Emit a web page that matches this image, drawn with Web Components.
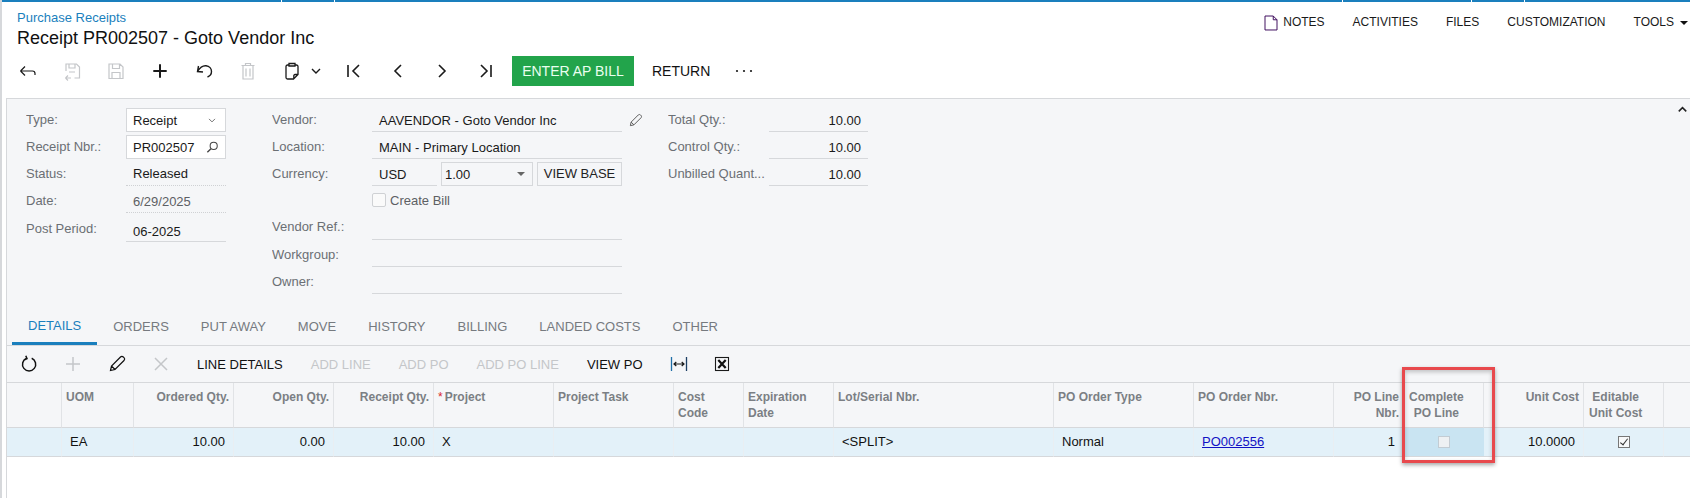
<!DOCTYPE html>
<html>
<head>
<meta charset="utf-8">
<title>Receipt PR002507</title>
<style>
  html, body { margin: 0; padding: 0; background: #fff; }
  body { font: 13px "Liberation Sans", Arial, sans-serif; color: #1a1a1a; height: 498px; overflow: hidden; }
</style>
</head>
<body>

<template id="ico">
  <style>:host { display: inline-flex; flex: none; width: 24px; height: 24px; align-items: center; justify-content: center; } svg { display: block; overflow: visible; }</style>
  <svg width="24" height="24" viewBox="0 0 24 24" fill="none" stroke="currentColor" stroke-width="1.2"></svg>
</template>

<script>
const ICONS = {
  back: '<path d="M4.500 12h12c1.700 0 2.500 1 2.500 2.500V16M4.500 12L9 7.500M4.500 12L9 16.500"/>',
  saveclose: '<path d="M6 12V5h10.500L19.500 8v11h-5M9 5v4h6V5M11 19H5.500M5.500 19L8 16.500M5.500 19L8 21.500M9 13h6"/>',
  save: '<path d="M5 5h11l3 3v11.500H5zM8.500 5v4.500h7V5M8 19.500v-6h8v6"/>',
  plus: '<path stroke-width="2" d="M12 5.300v13.400M5.300 12h13.400"/>',
  undo: '<path stroke-width="1.400" d="M6.500 7L5.500 12.500l5.500.5M5.500 12.500C8 8.500 11 6.500 14 6.800c3.500.4 5.500 3 5.500 5.700 0 2.500-1.500 4.500-4 5.500"/>',
  trash: '<path d="M5.500 6.500h13M9.500 6.500V4.500h5v2M7 6.500v13.500h10V6.500M10 9.500v8M14 9.500v8"/>',
  clip: '<path stroke-width="1.300" d="M8.500 6H7.500A1.500 1.500 0 0 0 6 7.500v11A1.500 1.500 0 0 0 7.500 20h6l4.500-4.500v-8A1.500 1.500 0 0 0 16.500 6h-1M9 4.500h6V7H9zM18 15.500h-3a1.200 1.200 0 0 0-1.200 1.200V20"/>',
  chev: '<path stroke-width="1.400" d="M8 10l4 4 4-4"/>',
  first: '<path stroke-width="1.600" d="M6 6v12M17 6l-6 6 6 6"/>',
  prev: '<path stroke-width="1.600" d="M15 6l-6 6 6 6"/>',
  next: '<path stroke-width="1.600" d="M9 6l6 6-6 6"/>',
  last: '<path stroke-width="1.600" d="M17 6v12M7 6l6 6-6 6"/>',
  more: '<g fill="currentColor" stroke="none"><circle cx="5" cy="12" r="1.100"/><circle cx="12" cy="12" r="1.100"/><circle cx="19" cy="12" r="1.100"/></g>',
  reload: '<path stroke-width="1.500" d="M9.500 6.300a6.600 6.600 0 1 0 5.200 0M8.800 3.800l1.200 2.900-2.900 1.300"/>',
  gplus: '<path stroke-width="1.500" d="M12 5v14M5 12h14"/>',
  pencil: '<path stroke-width="1.200" d="M5.500 18.500l1-4.500L15.500 5c.8-.8 2-.8 2.800 0l.7.7c.8.800.8 2 0 2.800L10 17.500zM6.500 14l3.500 3.500"/>',
  cross: '<path stroke-width="1.500" d="M6 6l12 12M18 6L6 18"/>',
  fit: '<path d="M4.500 5v14" stroke="#1f6fa8" stroke-width="1.300"/><path d="M19.500 5v14" stroke="#1d3f63" stroke-width="1.300"/><path d="M7 12h10M9.300 10L7 12l2.300 2M14.700 10l2.300 2-2.300 2" stroke="#1a1a1a"/>',
  excel: '<rect x="4.500" y="5.500" width="13" height="13" stroke="#1a1a1a" stroke-width="1.100"/><path d="M7.300 8l7.400 8M14.700 8l-7.400 8" stroke="#111" stroke-width="2.200"/>',
  search: '<circle cx="13.500" cy="10" r="4.500" stroke-width="1.300"/><path stroke-width="1.700" d="M10 13.500l-4.500 4.500"/>',
  note: '<path stroke="#3d0a5c" stroke-width="1.300" d="M4 2.700h11l5 5v13.600H4zM15 2.700v5h5"/>',
  up: '<path stroke-width="2.400" d="M6 15l6-6 6 6"/>',
  dropchev: '<path stroke-width="1" d="M8 10.500l4 4 4-4"/>'
};
class UiIcon extends HTMLElement {
  connectedCallback() {
    const root = this.attachShadow({ mode: 'open' });
    root.appendChild(document.getElementById('ico').content.cloneNode(true));
    const size = this.getAttribute('size') || '24';
    const svg = root.querySelector('svg');
    svg.setAttribute('width', size);
    svg.setAttribute('height', size);
    svg.innerHTML = ICONS[this.getAttribute('name')];
    const box = this.getAttribute('box');
    if (box) { this.style.width = box + 'px'; this.style.height = box + 'px'; }
    if (this.hasAttribute('off')) this.style.color = '#c4c6c9';
  }
}
customElements.define('ui-icon', UiIcon);

class TopLine extends HTMLElement {
  constructor() {
    super();
    this.attachShadow({ mode: 'open' }).innerHTML = `
      <style>
        :host { display: flex; height: 2px; gap: 1px; flex: none; }
        i { display: block; background: #1a7fbd; }
      </style>
      <i style="width:279px"></i><i style="width:52px"></i><i style="width:1007px"></i>
      <i style="width:128px"></i><i style="width:52px"></i><i style="flex:1"></i>`;
  }
}
customElements.define('top-line', TopLine);

class PageHeader extends HTMLElement {
  constructor() {
    super();
    this.attachShadow({ mode: 'open' }).innerHTML = `
      <style>
        :host { display: flex; justify-content: space-between; height: 48px; flex: none; }
        .t { padding: 8px 0 0 15px; }
        .crumb { color: #1a7fbd; font-size: 13px; line-height: 15px; }
        .title { font-size: 18px; line-height: 24px; margin-top: 1px; color: #111; }
        .acts { display: flex; padding-top: 13px; height: 15px; line-height: 15px; font-size: 12px; }
        .acts span { display: flex; align-items: center; margin-left: 28px; }
        .acts ui-icon { margin: 0 3px 0 0; }
        .acts b { font-weight: normal; }
        .car { width: 0; height: 0; border: 4px solid transparent; border-top: 4px solid #111; border-bottom: 0; margin-left: 6px; }
      </style>
      <div class="t"><div class="crumb">Purchase Receipts</div><div class="title">Receipt PR002507 - Goto Vendor Inc</div></div>
      <div class="acts">
        <span><ui-icon name="note" size="18" box="18"></ui-icon><b>NOTES</b></span>
        <span><b>ACTIVITIES</b></span><span><b>FILES</b></span><span><b>CUSTOMIZATION</b></span>
        <span style="margin-right:2px"><b>TOOLS</b><i class="car"></i></span>
      </div>`;
  }
}
customElements.define('page-header', PageHeader);

class MainToolbar extends HTMLElement {
  constructor() {
    super();
    const ic = (n, a) => `<ui-icon name="${n}" ${a || ''}></ui-icon>`;
    this.attachShadow({ mode: 'open' }).innerHTML = `
      <style>
        :host { display: flex; align-items: center; height: 30px; padding: 6px 0 12px 14px; gap: 20px; color: #1a1a1a; flex: none; }
        .btn { background: #22a44b; color: #eafff0; height: 30px; line-height: 30px; font-size: 14px; margin-left: -6px; width: 122px; text-align: center; }
        .ret { font-size: 14px; margin-left: -2px; color: #111; }
      </style>
      ${ic('back')}${ic('saveclose','off')}${ic('save','off')}${ic('plus')}${ic('undo')}${ic('trash','off')}
      ${ic('clip')}<ui-icon name="chev" size="24" box="14" style="margin-left:-15px"></ui-icon>
      <ui-icon name="first" style="margin-left:-1px"></ui-icon>${ic('prev')}${ic('next')}${ic('last')}
      <div class="btn">ENTER AP BILL</div><div class="ret">RETURN</div>
      <ui-icon name="more" style="margin-left:2px"></ui-icon>`;
  }
}
customElements.define('main-toolbar', MainToolbar);

class FormField extends HTMLElement {
  constructor() {
    super();
    this.attachShadow({ mode: 'open' }).innerHTML = `
      <style>
        :host { display: flex; height: 27px; box-sizing: border-box; }
        .l { width: var(--lw, 100px); flex: none; color: #6b6f74; line-height: var(--lh, 24px); white-space: nowrap; overflow: hidden; box-sizing: border-box; }
        .v { flex: 1; display: flex; min-width: 0; height: 24px; }
      </style>
      <div class="l"></div><div class="v"><slot></slot></div>`;
  }
  connectedCallback() {
    this.shadowRoot.querySelector('.l').textContent = this.getAttribute('label') || '';
  }
}
customElements.define('form-field', FormField);

class FieldValue extends HTMLElement {
  constructor() {
    super();
    this.attachShadow({ mode: 'open' }).innerHTML = `
      <style>
        :host { display: flex; align-items: center; flex: 1; box-sizing: border-box; height: 24px; padding: 1px 7px 0; border-bottom: 1px solid #d6d8db; color: #1a1a1a; position: relative; min-width: 0; }
        :host([kind=box]) { border: 1px solid #d6d8db; background: #fff; padding: 0 6px; }
        :host([kind=dot]) { border-bottom: 1px dotted #cfd1d4; }
        :host([kind=right]) { justify-content: flex-end; }
        :host([muted]) { color: #5d6064; }
        ::slotted(ui-icon) { position: absolute; right: 4px; top: 2px; color: #444; }
      </style>
      <slot></slot>`;
  }
}
customElements.define('field-value', FieldValue);

class FormPanel extends HTMLElement {
  constructor() {
    super();
    this.attachShadow({ mode: 'open' }).innerHTML = `
      <style>
        :host { display: flex; height: 210px; padding: 9px 0 0 19px; box-sizing: border-box; position: relative; }
        .c1 { width: 200px; flex: none; }
        .c2 { width: 378px; flex: none; margin-left: 46px; }
        .c3 { width: 200px; flex: none; margin-left: 18px; --lw: 101px; }
        .c2 form-field { padding-right: 28px; }
        .c2 form-field.p { padding-right: 0; }
        .up { position: absolute; right: 0; top: 3px; color: #222; }
        .pen { width: 26px; margin-right: 2px; color: #555; }
        .cur { display: flex; flex: 1; gap: 4px; }
        .usd { flex: none; width: 65px; }
        .rate { flex: none; width: 92px; justify-content: space-between; padding: 0 7px 0 3px; background: transparent; }
        .vb { flex: none; width: 85px; height: 24px; box-sizing: border-box; border: 1px solid #d6d8db; text-align: center; line-height: 22px; color: #222; }
        .tri { width: 0; height: 0; border: 4px solid transparent; border-top: 4px solid #666; border-bottom: 0; }
        .chk { display: flex; align-items: center; color: #5d6064; gap: 4px; height: 22px; }
        .chk i { width: 14px; height: 14px; box-sizing: border-box; border: 1px solid #cfd1d4; background: #fafafa; border-radius: 2px; }
      </style>
      <div class="c1">
        <form-field label="Type:"><field-value kind="box">Receipt<ui-icon name="dropchev" size="18" box="18"></ui-icon></field-value></form-field>
        <form-field label="Receipt Nbr.:"><field-value kind="box">PR002507<ui-icon name="search" size="19" box="18"></ui-icon></field-value></form-field>
        <form-field label="Status:"><field-value kind="dot" style="padding-top:0">Released</field-value></form-field>
        <form-field label="Date:"><field-value kind="dot" muted>6/29/2025</field-value></form-field>
        <form-field label="Post Period:" style="--lh:26px"><field-value style="margin-top:2px;padding-top:3px">06-2025</field-value></form-field>
      </div>
      <div class="c2">
        <form-field class="p" label="Vendor:"><field-value>AAVENDOR - Goto Vendor Inc</field-value><ui-icon class="pen" name="pencil" size="19"></ui-icon></form-field>
        <form-field label="Location:"><field-value>MAIN - Primary Location</field-value></form-field>
        <form-field label="Currency:"><div class="cur"><field-value class="usd">USD</field-value><field-value class="rate" kind="box">1.00<i class="tri"></i></field-value><div class="vb">VIEW BASE</div></div></form-field>
        <form-field label=""><div class="chk"><i></i>Create Bill</div></form-field>
        <form-field label="Vendor Ref.:" style="--lh:22px"><field-value></field-value></form-field>
        <form-field label="Workgroup:"><field-value></field-value></form-field>
        <form-field label="Owner:"><field-value></field-value></form-field>
      </div>
      <div class="c3">
        <form-field label="Total Qty.:"><field-value kind="right">10.00</field-value></form-field>
        <form-field label="Control Qty.:"><field-value kind="right">10.00</field-value></form-field>
        <form-field label="Unbilled Quant..."><field-value kind="right">10.00</field-value></form-field>
      </div>
      <ui-icon class="up" name="up" size="15" box="15"></ui-icon>`;
  }
}
customElements.define('form-panel', FormPanel);

class TabBar extends HTMLElement {
  constructor() {
    super();
    const tabs = ['DETAILS','ORDERS','PUT AWAY','MOVE','HISTORY','BILLING','LANDED COSTS','OTHER'];
    this.attachShadow({ mode: 'open' }).innerHTML = `
      <style>
        :host { display: flex; height: 37px; padding-left: 5px; border-bottom: 1px solid #d6d8db; box-sizing: border-box; }
        span { padding: 0 16px; line-height: 36px; height: 36px; box-sizing: border-box; color: #767a7f; font-size: 13px; }
        .on { color: #1a7fbd; border-bottom: 3px solid #1a7fbd; line-height: 34px; }
      </style>
      ${tabs.map((t, i) => `<span class="${i ? '' : 'on'}">${t}</span>`).join('')}`;
  }
}
customElements.define('tab-bar', TabBar);

class GridToolbar extends HTMLElement {
  constructor() {
    super();
    this.attachShadow({ mode: 'open' }).innerHTML = `
      <style>
        :host { display: flex; align-items: center; height: 37px; padding-left: 10px; border-bottom: 1px solid #d6d8db; box-sizing: border-box; color: #111; font-size: 13px; }
        ui-icon { margin-right: 20px; }
        .t { margin-right: 28px; }
        .off { color: #c4c6c9; }
      </style>
      <ui-icon name="reload"></ui-icon>
      <ui-icon name="gplus" off></ui-icon>
      <ui-icon name="pencil"></ui-icon>
      <ui-icon name="cross" off></ui-icon>
      <span class="t" style="margin-left:4px">LINE DETAILS</span>
      <span class="t off">ADD LINE</span><span class="t off">ADD PO</span><span class="t off">ADD PO LINE</span>
      <span class="t" style="margin-right:24px">VIEW PO</span>
      <ui-icon name="fit"></ui-icon><ui-icon name="excel"></ui-icon>`;
  }
}
customElements.define('grid-toolbar', GridToolbar);

class DataGrid extends HTMLElement {
  constructor() {
    super();
    const widths = [55, 72, 100, 100, 100, 120, 120, 70, 90, 220, 140, 140, 70, 80, 100, 80, 26];
    const head = [
      ['', ''], ['UOM', ''], ['Ordered Qty.', 'r'], ['Open Qty.', 'r'], ['Receipt Qty.', 'r'],
      ['<em>*</em>Project', 'p'], ['Project Task', ''], ['Cost<br>Code', ''], ['Expiration<br>Date', ''],
      ['Lot/Serial Nbr.', ''], ['PO Order Type', ''], ['PO Order Nbr.', ''], ['PO Line<br>Nbr.', 'r'],
      ['<u>Complete<br>PO Line</u>', 'c'], ['Unit Cost', 'r'], ['<u>Editable<br>Unit Cost</u>', 'c'], ['', 'e']
    ];
    const row = [
      ['', ''], ['EA', ''], ['10.00', 'r'], ['0.00', 'r'], ['10.00', 'r'], ['X', ''], ['', ''], ['', ''], ['', ''],
      ['&lt;SPLIT&gt;', ''], ['Normal', ''], ['<a>PO002556</a>', ''], ['1', 'r'],
      ['<i class="box"></i>', 'm hi'], ['10.0000', 'r'], ['<i class="box on"></i>', 'm'], ['', 'e']
    ];
    const cells = (list, cls) => list.map(([t, k]) => `<div class="${cls} ${k}">${t}</div>`).join('');
    this.attachShadow({ mode: 'open' }).innerHTML = `
      <style>
        :host { display: block; position: relative; }
        .g { display: grid; grid-template-columns: ${widths.map(w => w + 'px').join(' ')}; }
        .h { height: 45px; background: #f5f6f8; border-right: 1px solid #e1e3e6; border-bottom: 1px solid #d6d8db; box-sizing: border-box; padding: 6px 4px 0 4px; font-size: 12px; font-weight: bold; line-height: 16px; color: #7b7f84; white-space: nowrap; }
        .h.e, .d.e { border-right: 0; }
        .h.r { text-align: right; }
        .h.p em { color: #d9262c; font-style: normal; font-weight: normal; margin-right: 2px; }
        .h.c { padding-left: 5px; }
        .h.c u { display: inline-block; text-align: center; text-decoration: none; }
        .d { height: 29px; background: #e3f1f9; border-bottom: 1px solid #d6d8db; border-right: 1px solid #e9eef2; box-sizing: border-box; padding: 0 8px; line-height: 28px; font-size: 13px; color: #111; }
        .d.r { text-align: right; }
        .d.m { display: flex; align-items: center; justify-content: center; padding: 0; }
        .d.hi { background: #c9e4f2; border-right: 0; }
        a { color: #1212c4; text-decoration: underline; }
        .box { width: 12px; height: 12px; box-sizing: border-box; border: 1px solid #c3ccd3; background: #eef1f3; position: relative; }
        .box.on { background: #f7f8f9; border-color: #777; }
        .box.on::after { content: ""; position: absolute; left: 3px; top: 0; width: 3px; height: 7px; border: solid #333; border-width: 0 1px 1px 0; transform: rotate(38deg); }
        .mark { position: absolute; left: 1395px; top: -16px; width: 93px; height: 96px; box-sizing: border-box; border: 3.5px solid #e8494d; box-shadow: 0 2px 4px rgba(0,0,0,.35), inset 0 2px 4px rgba(0,0,0,.22); }
      </style>
      <div class="g">${cells(head, 'h')}${cells(row, 'd')}</div>
      <div class="mark"></div>`;
  }
}
customElements.define('data-grid', DataGrid);

class ReceiptPage extends HTMLElement {
  constructor() {
    super();
    this.attachShadow({ mode: 'open' }).innerHTML = `
      <style>
        :host { display: flex; flex-direction: column; height: 498px; box-sizing: border-box; border-left: 2px solid #d6d8db; }
        .frame { flex: 1; margin-left: 4px; border-left: 1px solid #d6d8db; }
        .top { background: #f5f6f8; border-top: 1px solid #d6d8db; }
      </style>
      <top-line></top-line>
      <page-header></page-header>
      <main-toolbar></main-toolbar>
      <div class="frame">
        <div class="top">
          <form-panel></form-panel>
          <tab-bar></tab-bar>
          <grid-toolbar></grid-toolbar>
        </div>
        <data-grid></data-grid>
      </div>`;
  }
}
customElements.define('receipt-page', ReceiptPage);
</script>

<receipt-page></receipt-page>
</body>
</html>
